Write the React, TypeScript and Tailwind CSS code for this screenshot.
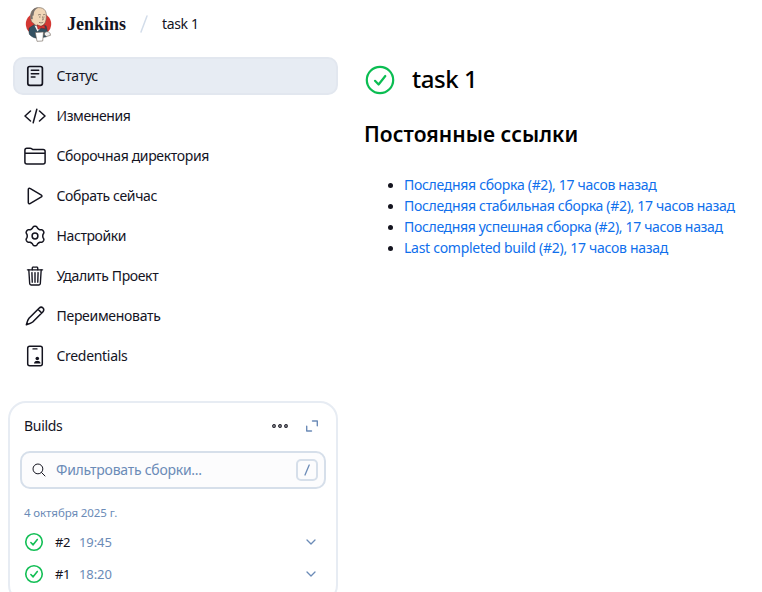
import type { ReactNode } from "react";
import { IoSearchOutline, IoTrashOutline } from "react-icons/io5";

function JenkinsLogo() {
  return (
    <svg className="h-[35px] w-[27px] shrink-0" viewBox="0 0 27 35" fill="none">
      <ellipse cx="13.500" cy="17" rx="12.700" ry="11.800" fill="#d33833" />
      <path d="M4.500 27.500c-.6-2-.7-4.500-.3-6.500L9 17.800l7 1.500 5-.5 1.500 6-1 5-9 1.500c-3-.2-6-1.500-8-3.800Z" fill="#335061" stroke="#23343f" strokeWidth=".5" />
      <path d="M6 13C4.500 7 6.500 1 13.500.6 20 .5 21.800 5 21.300 10c-.1 4-1.300 7.500-4.500 9-3 1.200-6 0-8-2.500C7.500 15.500 6.500 15 6 13Z" fill="#f0d6b7" stroke="#6b5f55" strokeWidth=".6" />
      <path d="M5.900 12C5 6 7 1 13.500.6 9.500 2.500 8.800 5 8.700 8.500L7.500 8.800l.3 3.500Z" fill="#77706c" />
      <path d="M13 8.200c1-.9 2.200-.9 3 0M18 8c.8-.7 1.800-.6 2.500 0M14 10h1.500M18.500 10h1M17.500 9.500l.8 3-1.300.5M14 15.300c1.500.8 3 .7 4.200-.1" stroke="#49423d" strokeWidth=".6" />
      <path d="m9.500 18.500 3 6 3.500-4Z" fill="#f7f7f5" />
      <path d="m12 17.800 4 1.500 3.500-1.500.8 4-4-.8-3.300 1.300-1-4.500Z" fill="#d33833" stroke="#81171b" strokeWidth=".5" />
      <path d="m10.300 25.500 8.200-.5-.8 9-5.700.3-1.700-8.800Z" fill="#fff" stroke="#6b5f55" strokeWidth=".6" />
      <path d="M19.500 26c1.500-2 4.500-1.500 5.500.3l.5 2-4 1.200-2-1.500V26Z" fill="#eee" stroke="#6b5f55" strokeWidth=".6" />
    </svg>
  );
}

const stroke = {
  fill: "none",
  stroke: "currentColor",
  strokeLinecap: "round",
  strokeLinejoin: "round",
} as const;

function DetailsIcon() {
  return (
    <svg className="size-[22px]" viewBox="0 0 22 22" {...stroke} strokeWidth="1.700">
      <rect x="3.800" y="1.500" width="14.600" height="18.800" rx="2" />
      <path d="M7.300 5.300h7.400M7.300 8.700h7.400M7.300 12h3.700" strokeWidth="1.500" />
    </svg>
  );
}

function CodeIcon() {
  return (
    <svg className="size-[22px]" viewBox="0 0 22 22" {...stroke} strokeWidth="1.500">
      <path d="M6.500 6 1 11l5.500 5M15.500 6l5.500 5-5.500 5M12.800 4.300 9.200 17.700" />
    </svg>
  );
}

function FolderIcon() {
  return (
    <svg className="size-[22px]" viewBox="0 0 22 22" {...stroke} strokeWidth="1.500">
      <path d="M.9 8V5.200c0-1.200.8-2 2-2h3.200c.6 0 1 .1 1.500.4l.6.500c.4.300.8.400 1.300.4h9.600c1.200 0 2 .8 2 2V17c0 1.200-.8 2-2 2H2.900c-1.200 0-2-.8-2-2V8.300h20" />
    </svg>
  );
}

function PlayIcon() {
  return (
    <svg className="size-[22px]" viewBox="0 0 22 22" {...stroke} strokeWidth="1.500">
      <path d="M4.300 4.400v13.200c0 .9.900 1.500 1.700 1l11.400-6.700c.7-.4.7-1.400 0-1.800L6 3.400c-.8-.5-1.700.1-1.700 1Z" />
    </svg>
  );
}

// Outline of a rounded cog with six lobes, the first one pointing up.
const cogPoints = Array.from({ length: 96 }, (_, i) => {
  const angle = (i / 96) * Math.PI * 2;
  const wave = Math.tanh(1.6 * Math.cos(6 * angle)) / Math.tanh(1.6);
  const radius = 8.75 + 0.95 * wave;
  return `${(11 + radius * Math.sin(angle)).toFixed(2)},${(11 - radius * Math.cos(angle)).toFixed(2)}`;
}).join(" ");

function CogIcon() {
  return (
    <svg className="size-[22px]" viewBox="0 0 22 22" {...stroke} strokeWidth="1.500">
      <polygon points={cogPoints} />
      <circle cx="11" cy="11" r="2.900" />
    </svg>
  );
}

function PencilIcon() {
  return (
    <svg className="size-[22px]" viewBox="0 0 22 22" {...stroke} strokeWidth="1.600">
      <path d="M15.300 3 5 13.300c-1.300 1.500-2 3.800-2.600 6.300 2.500-.6 4.800-1.300 6.300-2.600L19 6.700c1-1 1-2.700 0-3.700s-2.700-1-3.700 0ZM14 4.300 17.700 8" />
    </svg>
  );
}

function CredentialsIcon() {
  return (
    <svg className="size-[22px]" viewBox="0 0 22 22" {...stroke} strokeWidth="1.500">
      <rect x="3.700" y="1.300" width="14.600" height="19.400" rx="2" />
      <path d="M9 3.900h4" strokeWidth="1.300" />
      <circle cx="13.300" cy="13.500" r="1.800" fill="currentColor" stroke="none" />
      <path d="M10 18.500c.2-2 1.300-2.500 3.300-2.500s3.100.5 3.300 2.500Z" fill="currentColor" stroke="none" />
    </svg>
  );
}

function SuccessIcon({ className, weight }: { className: string; weight: number }) {
  return (
    <svg className={className} viewBox="0 0 32 32" {...stroke} strokeWidth={weight}>
      <circle cx="16" cy="16" r="13.200" />
      <path d="m11 16.800 3.600 3.700 6.700-8.500" />
    </svg>
  );
}

function Chevron() {
  return (
    <svg className="size-3" viewBox="0 0 12 12" {...stroke} strokeWidth="1.300">
      <path d="m2 4 4 4 4-4" />
    </svg>
  );
}

type Task = { label: string; icon: ReactNode; tracking: string; active?: boolean };

const tasks: Task[] = [
  { label: "Статус", icon: <DetailsIcon />, tracking: "tracking-[-0.3px]", active: true },
  { label: "Изменения", icon: <CodeIcon />, tracking: "tracking-[-0.4px]" },
  { label: "Сборочная директория", icon: <FolderIcon />, tracking: "tracking-[-0.35px]" },
  { label: "Собрать сейчас", icon: <PlayIcon />, tracking: "tracking-[-0.37px]" },
  { label: "Настройки", icon: <CogIcon />, tracking: "tracking-[-0.4px]" },
  { label: "Удалить Проект", icon: <IoTrashOutline size={22} />, tracking: "tracking-[-0.37px]" },
  { label: "Переименовать", icon: <PencilIcon />, tracking: "tracking-[-0.3px]" },
  { label: "Credentials", icon: <CredentialsIcon />, tracking: "tracking-[-0.3px]" },
];

const links = [
  { label: "Последняя сборка (#2), 17 часов назад", tracking: "tracking-[-0.3px]" },
  { label: "Последняя стабильная сборка (#2), 17 часов назад", tracking: "tracking-[-0.31px]" },
  { label: "Последняя успешная сборка (#2), 17 часов назад", tracking: "tracking-[-0.33px]" },
  { label: "Last completed build (#2), 17 часов назад", tracking: "tracking-[-0.28px]" },
];

const builds = [
  { id: "#2", time: "19:45" },
  { id: "#1", time: "18:20" },
];

function BuildsCard() {
  return (
    <section className="mt-[26px] ml-2 h-[202px] w-[330px] shrink-0 rounded-[18px] border-2 border-[#e7ecf3] px-[10px]">
      <header className="mt-[11px] flex h-6 items-center pl-1">
        <h2 className="flex-1 tracking-[-0.3px]">Builds</h2>
        <svg className="h-4 w-4" viewBox="0 0 16 16" {...stroke} strokeWidth="1.200">
          <circle cx="2" cy="8" r="1.300" />
          <circle cx="8" cy="8" r="1.300" />
          <circle cx="14" cy="8" r="1.300" />
        </svg>
        <svg className="mr-[6px] ml-4 size-4 text-[#6b8bb7]" viewBox="0 0 16 16" {...stroke} strokeWidth="1.400">
          <path d="M8.500 3h4.800v4.800M2.700 8.200V13h4.800" />
        </svg>
      </header>
      <div className="mt-[13px] flex h-[38px] items-center rounded-[10px] border-2 border-[#d6dfea] bg-[#fcfcfd] pr-[6px] pl-[9px]">
        <IoSearchOutline size={16} />
        <span className="ml-[9px] flex-1 tracking-[-0.26px] text-[#6b8bb7]">Фильтровать сборки...</span>
        <kbd className="flex size-[22px] items-center justify-center rounded-[5px] border-2 border-[#d6dfea] text-[#6b8bb7]">
          <svg className="h-3 w-2" viewBox="0 0 8 12" {...stroke} strokeWidth="1.300">
            <path d="M6.200 1 2 11" />
          </svg>
        </kbd>
      </div>
      <div className="mt-4 pl-1 text-[11.500px] leading-4 tracking-[-0.1px] text-[#6b8bb7]">4 октября 2025 г.</div>
      <ul className="mt-[5px]">
        {builds.map((build) => (
          <li key={build.id} className="flex h-8 items-center pl-1 text-[13px]">
            <SuccessIcon className="size-5 text-[#14bf56]" weight={2.6} />
            <span className="ml-[11px] w-6 tracking-[-0.3px]">{build.id}</span>
            <span className="flex-1 tracking-[-0.1px] text-[#6b8bb7]">{build.time}</span>
            <span className="mr-[9px] text-[#6b8bb7]">
              <Chevron />
            </span>
          </li>
        ))}
      </ul>
    </section>
  );
}

export default function App() {
  return (
    <div className="flex h-[592px] w-[762px] flex-col overflow-hidden bg-white font-['Noto_Sans',sans-serif] text-sm text-[#14141f]">
      <header className="flex h-12 shrink-0 items-center pl-[25px]">
        <JenkinsLogo />
        <span className="ml-[15px] pt-px font-['Liberation_Serif',serif] text-[18px] font-bold">Jenkins</span>
        <svg className="ml-[14px] h-[18px] w-2" viewBox="0 0 8 18" {...stroke} strokeWidth="1.500">
          <path d="M7 1 1 17" stroke="#d3ddea" />
        </svg>
        <span className="ml-[14px] tracking-[-0.35px]">task 1</span>
      </header>
      <div className="flex min-h-0 flex-1">
        <aside className="flex w-[338px] shrink-0 flex-col">
          <nav className="mt-[9px] ml-[13px] flex flex-col gap-0.5">
            {tasks.map((task) => (
              <a
                key={task.label}
                className={
                  task.active
                    ? "flex h-[38px] items-center rounded-[10px] border-2 border-[#e2e7ef] bg-[#e7ecf3] pl-[9px]"
                    : "flex h-[38px] items-center rounded-[10px] border-2 border-transparent pl-[9px]"
                }
              >
                {task.icon}
                <span className={`ml-[10.5px] ${task.tracking}`}>{task.label}</span>
              </a>
            ))}
          </nav>
          <BuildsCard />
        </aside>
        <main className="pl-[26px] text-black">
          <div className="mt-[14px] flex h-9 items-center">
            <SuccessIcon className="size-8 text-[#0bbd52]" weight={2.2} />
            <h1 className="-mt-0.5 ml-4 text-2xl font-medium tracking-[-0.45px]">task 1</h1>
          </div>
          <h2 className="mt-[22px] text-[21px] leading-7 font-semibold tracking-[0.05px]">Постоянные ссылки</h2>
          <ul className="mt-[26px] leading-[21px]">
            {links.map((link) => (
              <li key={link.label} className="flex items-center whitespace-nowrap">
                <span className="mr-[11px] ml-6 size-[5px] translate-y-px rounded-full bg-[#14141f]" />
                <a className={`text-[#0f6fec] ${link.tracking}`}>{link.label}</a>
              </li>
            ))}
          </ul>
        </main>
      </div>
    </div>
  );
}
